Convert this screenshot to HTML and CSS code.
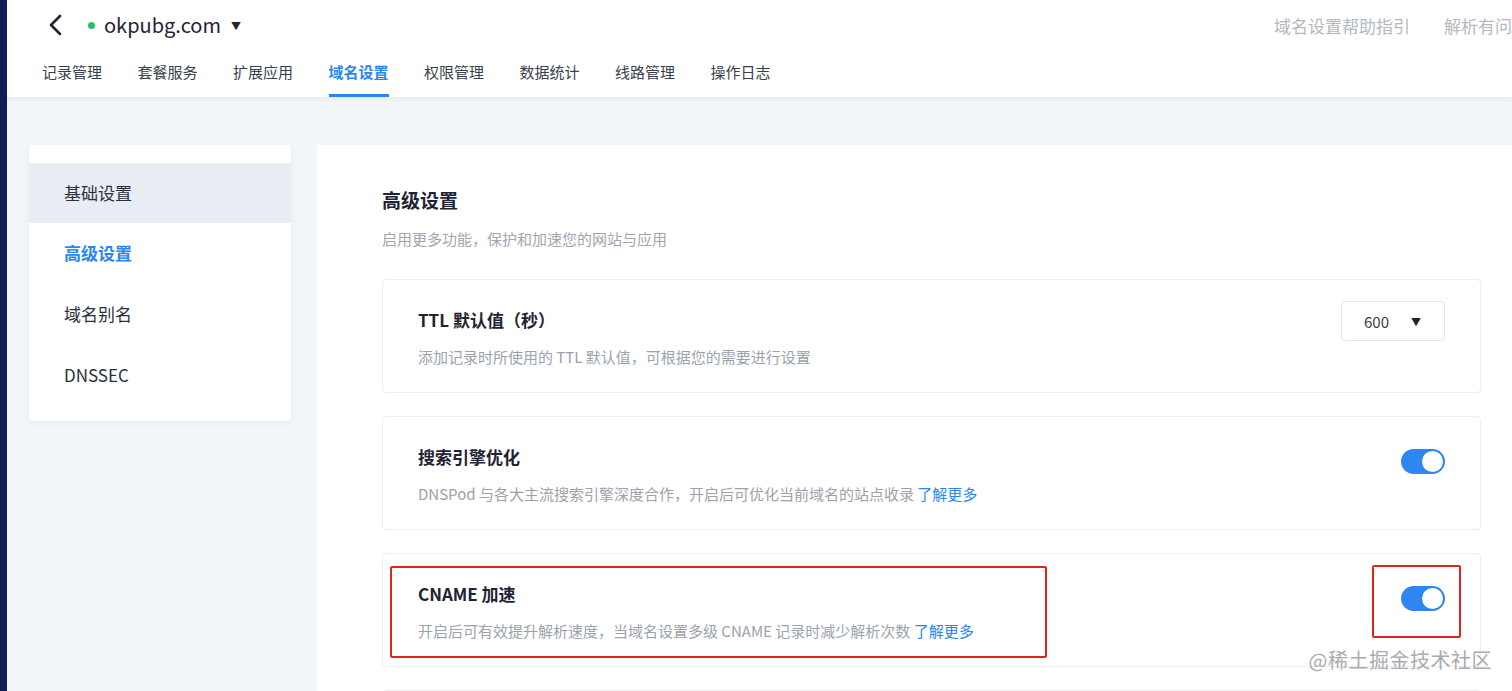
FILE: index.html
```html
<!DOCTYPE html>
<html lang="zh-CN">
<head>
  <meta charset="UTF-8">
  <title>域名设置 - okpubg.com</title>
  <link rel="stylesheet" href="styles.css">
</head>
<body>
  <div class="app">

    <header class="header">
      <div class="header-top">
        <div class="domain">
          <svg class="back" width="16" height="22" viewBox="0 0 16 22">
            <path d="M12 2 L3 11 L12 20" fill="none" stroke="#1f2333" stroke-width="2.6" stroke-linecap="round" stroke-linejoin="round"/>
          </svg>
          <span class="dot"></span>
          <span class="domain-name">okpubg.com</span>
          <span class="caret">▼</span>
        </div>
        <div class="help-links">
          <a>域名设置帮助指引</a>
          <a>解析有问题？</a>
        </div>
      </div>
      <nav class="tabs">
        <a>记录管理</a>
        <a>套餐服务</a>
        <a>扩展应用</a>
        <a class="active">域名设置</a>
        <a>权限管理</a>
        <a>数据统计</a>
        <a>线路管理</a>
        <a>操作日志</a>
      </nav>
    </header>

    <div class="content">
      <aside class="side-menu">
        <div class="side-item current">基础设置</div>
        <div class="side-item active">高级设置</div>
        <div class="side-item">域名别名</div>
        <div class="side-item">DNSSEC</div>
      </aside>

      <main class="panel">
        <h2>高级设置</h2>
        <p class="panel-sub">启用更多功能，保护和加速您的网站与应用</p>

        <div class="option">
          <div class="option-text">
            <div class="option-title">TTL 默认值（秒）</div>
            <div class="option-desc">添加记录时所使用的 TTL 默认值，可根据您的需要进行设置</div>
          </div>
          <div class="select">
            <span>600</span>
            <span class="select-caret">▼</span>
          </div>
        </div>

        <div class="option">
          <div class="option-text">
            <div class="option-title">搜索引擎优化</div>
            <div class="option-desc">DNSPod 与各大主流搜索引擎深度合作，开启后可优化当前域名的站点收录 <a>了解更多</a></div>
          </div>
          <div class="switch"><span class="knob"></span></div>
        </div>

        <div class="option">
          <div class="option-text">
            <div class="option-title">CNAME 加速</div>
            <div class="option-desc">开启后可有效提升解析速度，当域名设置多级 CNAME 记录时减少解析次数 <a>了解更多</a></div>
          </div>
          <div class="switch"><span class="knob"></span></div>
          <!-- 截图上的红框标注 -->
          <div class="mark mark-text"></div>
          <div class="mark mark-switch"></div>
        </div>

        <div class="option"></div>
      </main>
    </div>

    <div class="watermark">@稀土掘金技术社区</div>
  </div>
</body>
</html>
```

FILE: styles.css
```css
* {
  box-sizing: border-box;
}

body {
  margin: 0;
  font-family: "Noto Sans CJK SC", "Noto Sans", sans-serif;
  color: #1f2333;
  background-color: #f3f6f8;
  overflow: hidden;
}

a {
  cursor: pointer;
}

.app {
  position: relative;
  height: 691px;
  border-left: 7px solid #0d1f55;
  overflow: hidden;
}

/* header */
.header {
  background-color: #fff;
  height: 97px;
  box-shadow: 0 2px 6px rgba(0, 0, 0, 0.06);
  position: relative;
  z-index: 1;
}

.header-top {
  display: flex;
  justify-content: space-between;
  align-items: center;
  height: 50px;
  padding-left: 41px;
}

.domain {
  display: flex;
  align-items: center;
}

.back {
  margin-right: 24px;
}

.dot {
  width: 7px;
  height: 7px;
  border-radius: 50%;
  background-color: #1fc56d;
  margin-right: 9px;
}

.domain-name {
  font-size: 20px;
  color: #1f2333;
  line-height: 24px;
}

.caret {
  font-size: 10px;
  margin-left: 10px;
  color: #1f2333;
}

.help-links {
  display: flex;
  gap: 34px;
  white-space: nowrap;
  margin-right: -34px;
}

.help-links a {
  font-size: 17px;
  color: #b3b8c1;
}

.tabs {
  display: flex;
  gap: 35.5px;
  padding-left: 35px;
  height: 47px;
}

.tabs a {
  font-size: 15px;
  color: #3a3f4b;
  line-height: 44px;
  height: 47px;
  border-bottom: 3px solid transparent;
}

.tabs a.active {
  color: #2a86ef;
  font-weight: bold;
  border-bottom-color: #2a86ef;
}

/* content */
.content {
  display: flex;
  align-items: flex-start;
  gap: 26px;
  padding: 48px 0 0 22px;
}

.side-menu {
  flex: 0 0 262px;
  background-color: #fff;
  border-radius: 4px;
  padding: 18px 0 15px;
  box-shadow: 0 2px 6px rgba(0, 0, 0, 0.06);
}

.side-item {
  height: 61px;
  line-height: 60px;
  padding-left: 35px;
  font-size: 17px;
  color: #2b2f3a;
}

.side-item.current {
  background-color: #e8ecf3;
  height: 60px;
}

.side-item.active {
  color: #2a86ef;
  font-weight: bold;
}

.panel {
  flex: 0 0 1229px;
  min-height: 600px;
  background-color: #fff;
  padding: 39px 65px 0;
}

.panel h2 {
  margin: 0;
  font-size: 19px;
  line-height: 32px;
  font-weight: bold;
  color: #1f2333;
}

.panel-sub {
  margin: 12px 0 29px;
  font-size: 15px;
  line-height: 22px;
  color: #a0a6b0;
}

.option {
  position: relative;
  display: flex;
  justify-content: space-between;
  align-items: flex-start;
  height: 114px;
  padding: 21px 35px 0;
  border: 1px solid #eceef2;
  border-radius: 4px;
  margin-bottom: 23px;
}

.option-text {
  padding-top: 7px;
}

.option-title {
  font-size: 17px;
  line-height: 24px;
  font-weight: bold;
  color: #1f2333;
}

.option-desc {
  margin-top: 14px;
  font-size: 15px;
  line-height: 22px;
  color: #9ba2ad;
}

.option-desc a {
  color: #2a86ef;
}

.select {
  display: flex;
  justify-content: space-between;
  align-items: center;
  width: 104px;
  height: 40px;
  padding: 0 23px 0 22px;
  border: 1px solid #e3e5ea;
  border-radius: 4px;
  font-size: 15px;
  color: #3a3f4b;
}

.select-caret {
  font-size: 10px;
  color: #1f2333;
}

.switch {
  display: flex;
  justify-content: flex-end;
  align-items: center;
  width: 44px;
  height: 25px;
  margin-top: 11px;
  padding: 2px;
  border-radius: 13px;
  background-color: #2f86f2;
}

.knob {
  width: 21px;
  height: 21px;
  border-radius: 50%;
  background-color: #fff;
}

.mark {
  position: absolute;
  border: 2px solid #e2231a;
  border-radius: 2px;
}

.mark-text {
  left: 7px;
  top: 12px;
  width: 657px;
  height: 92px;
}

.mark-switch {
  left: 989px;
  top: 11px;
  width: 89px;
  height: 73px;
}

.watermark {
  position: absolute;
  right: 20px;
  bottom: 17px;
  font-size: 20px;
  color: #a9abb0;
  letter-spacing: 0.5px;
}
```
